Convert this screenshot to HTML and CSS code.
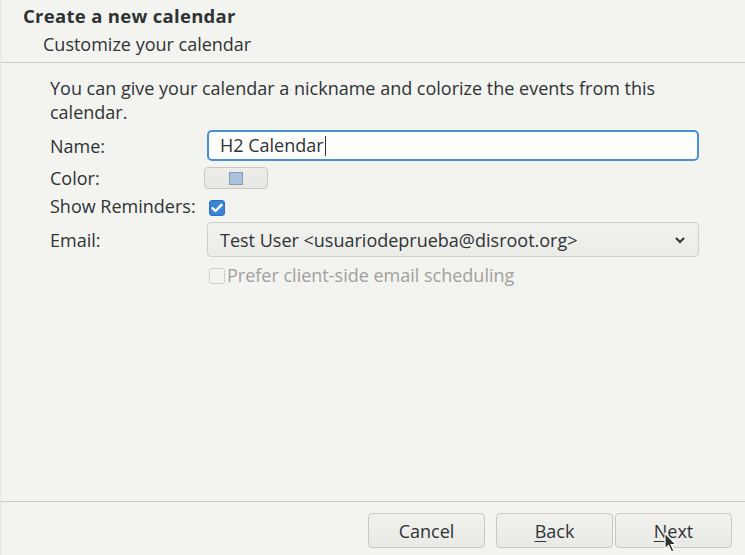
FILE: index.html
```html
<!DOCTYPE html>
<html>
<head>
<meta charset="utf-8">
<link rel="stylesheet" href="styles.css">
</head>
<body>
<div class="window">
  <div class="header">
    <div class="title">Create a new calendar</div>
    <div class="subtitle">Customize your calendar</div>
  </div>
  <div class="content">
    <p class="intro">You can give your calendar a nickname and colorize the events from this calendar.</p>
    <div class="form">
      <div class="label row-name">Name:</div>
      <div class="ctrl row-name"><div class="entry">H2 Calendar<span class="caret"></span></div></div>
      <div class="label row-color">Color:</div>
      <div class="ctrl row-color"><div class="colorbtn"><span class="swatch"></span></div></div>
      <div class="label row-rem">Show Reminders:</div>
      <div class="ctrl row-rem"><span class="check on"><svg width="12" height="10" viewBox="0 0 12 10"><path d="M1.5 5.2 L4.6 8 L10.5 1.8" fill="none" stroke="#fff" stroke-width="2.4" stroke-linecap="round" stroke-linejoin="round"/></svg></span></div>
      <div class="label row-email">Email:</div>
      <div class="ctrl row-email"><div class="combo"><span>Test User &lt;usuariodeprueba@disroot.org&gt;</span><svg width="12" height="8" viewBox="0 0 12 8"><path d="M2 2 L6 6 L10 2" fill="none" stroke="#2e3436" stroke-width="2"/></svg></div></div>
      <div class="ctrl row-pref"><label class="disabled"><span class="check off"></span>Prefer client-side email scheduling</label></div>
    </div>
  </div>
  <div class="footer">
    <button class="btn btn-cancel">Cancel</button>
    <button class="btn btn-back"><u>B</u>ack</button>
    <button class="btn btn-next"><u>N</u>ext</button>
  </div>
  <svg class="pointer" width="14" height="22" viewBox="0 0 14 22"><path d="M1 1 L1 17 L4.5 13.5 L7.5 20 L10 19 L7 12.5 L12 12.5 Z" fill="#2e3436" stroke="#fff" stroke-width="1.2" stroke-linejoin="round"/></svg>
</div>
</body>
</html>
```
FILE: styles.css
```css
* { box-sizing: border-box; }
html, body { margin: 0; padding: 0; }
body {
  background: #f3f3ef;
  font-family: "Open Sans", "Noto Sans", sans-serif;
  font-size: 18px;
  color: #2e3436;
}
.window {
  position: relative;
  width: 745px;
  height: 555px;
  display: flex;
  flex-direction: column;
  border-left: 1px solid #e6e6e2;
}
.header {
  height: 63px;
  border-bottom: 1px solid #cbcbc6;
  padding: 4px 0 0 22px;
}
.title {
  font-weight: 700;
  font-size: 18.5px;
  letter-spacing: 0.3px;
  line-height: 24px;
}
.subtitle {
  padding-left: 20px;
  line-height: 24px;
  margin-top: 4px;
}
.content {
  flex: 1;
  padding: 13px 0 0 49px;
}
.intro {
  margin: 0;
  width: 630px;
  line-height: 24px;
}
.form {
  display: grid;
  grid-template-columns: 157px 492px;
  grid-template-rows: 31px 6px 22px 9px 16px 8px 35px 10px 17px;
  margin-top: 6px;
  align-items: center;
}
.label { line-height: 20px; }
.row-name { grid-row: 1; }
.row-color { grid-row: 3; }
.row-rem { grid-row: 5; }
.row-email { grid-row: 7; }
.row-pref { grid-row: 9; grid-column: 2; }
.form > .label { grid-column: 1; }
.form > .ctrl { grid-column: 2; }
.entry {
  height: 31px;
  border: 2px solid #4a90d9;
  border-radius: 5px;
  background: #fdfdfb;
  padding-left: 11px;
  line-height: 27px;
  display: flex;
  align-items: center;
}
.caret {
  display: inline-block;
  width: 1px;
  height: 20px;
  background: #2e3436;
  margin-left: 1px;
}
.colorbtn {
  width: 64px;
  height: 22px;
  margin-left: -3px;
  border: 1px solid #cdc7c2;
  border-radius: 4px;
  background: linear-gradient(#eeeeea, #e6e6e2);
  display: flex;
  align-items: center;
  justify-content: center;
}
.swatch {
  width: 14px;
  height: 13px;
  background: #a8c1de;
  border: 1px solid #8e9aa8;
}
.check {
  display: inline-flex;
  align-items: center;
  justify-content: center;
  width: 16px;
  height: 16px;
  border-radius: 3px;
  vertical-align: middle;
}
.check.on {
  margin-left: 2px;
  background: #3a84d6;
  border: 1px solid #2c72c0;
}
.check.off {
  border: 1px solid #cfcfcb;
  background: #f3f3ef;
  margin-left: 2px;
  margin-right: 2px;
}
.combo {
  height: 35px;
  border: 1px solid #d2cec9;
  border-radius: 4px;
  background: linear-gradient(#f1f1ee, #ebebe8);
  display: flex;
  align-items: center;
  justify-content: space-between;
  padding: 0 12px 0 12px;
}
.disabled {
  color: #a1a19d;
  display: flex;
  align-items: center;
  line-height: 17px;
}
.footer {
  height: 54px;
  border-top: 1px solid #cbcbc6;
  display: flex;
  justify-content: flex-end;
  align-items: flex-start;
  padding: 11px 13px 0 0;
}
.btn {
  font-family: inherit;
  font-size: 18px;
  color: #2e3436;
  height: 35px;
  width: 117px;
  border: 1px solid #cdc7c2;
  border-radius: 4px;
  background: linear-gradient(#f1f1ee, #e9e9e6);
  padding: 0;
}
.btn-cancel { margin-right: 11px; }
.btn-back { margin-right: 2px; }
.btn u { text-underline-offset: 3px; }
.pointer {
  position: absolute;
  left: 663px;
  top: 532px;
}
```
